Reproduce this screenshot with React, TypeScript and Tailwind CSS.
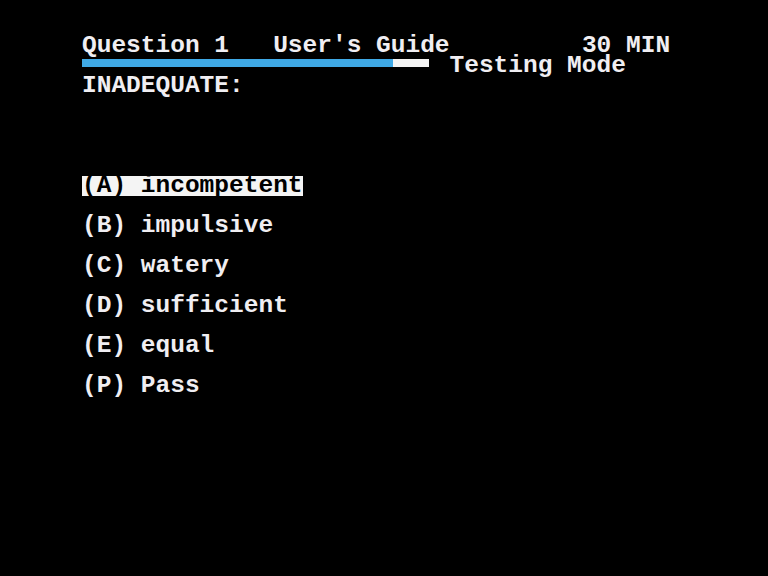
const options = [
	{ key: "A", label: "incompetent", selected: true },
	{ key: "B", label: "impulsive" },
	{ key: "C", label: "watery" },
	{ key: "D", label: "sufficient" },
	{ key: "E", label: "equal" },
	{ key: "P", label: "Pass" },
];

const Row = ({ children }: { children?: React.ReactNode }) => (
	<div className="h-[20px] leading-[20px] whitespace-pre">{children}</div>
);

const App = () => {
	return (
		<div
			className="w-[768px] h-[576px] bg-black text-[#f0eef2] font-bold text-[24.5px] pl-[82px] pt-[36px]"
			style={{ fontFamily: '"Liberation Mono", "DejaVu Sans Mono", monospace' }}
		>
			{/* Header */}
			<Row>{"Question 1   User's Guide         30 MIN"}</Row>

			{/* Progress bar + mode */}
			<div className="h-[20px] leading-[20px] flex items-start whitespace-pre">
				<div className="w-[367.5px] pt-[3px]">
					<div className="flex h-[8px] w-[347px]">
						<div className="w-[311px] bg-[#3fa9e6]" />
						<div className="flex-1 bg-[#f4f4f4]" />
					</div>
				</div>
				<span>Testing Mode</span>
			</div>

			{/* Question word */}
			<Row>INADEQUATE:</Row>
			<Row />
			<Row />
			<Row />
			<Row />

			{/* Answers */}
			{options.map((opt) => (
				<div key={opt.key}>
					<Row>
						<span className={opt.selected ? "bg-[#f4f4f4] text-black inline-block h-[20px]" : ""}>
							{`(${opt.key}) ${opt.label}`}
						</span>
					</Row>
					<Row />
				</div>
			))}
		</div>
	);
};

export default App;
